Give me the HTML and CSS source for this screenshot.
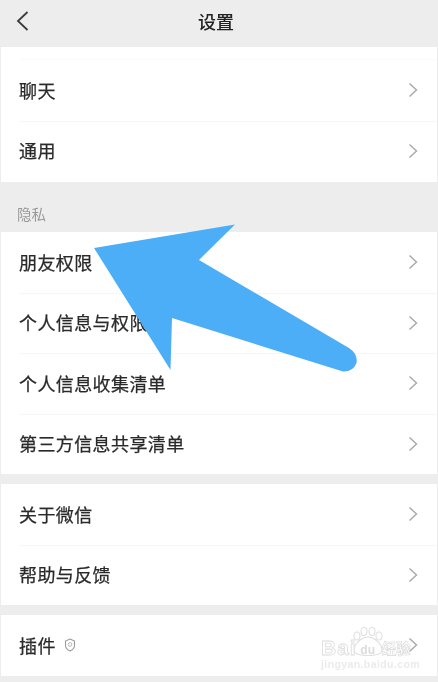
FILE: index.html
```html
<!DOCTYPE html>
<html lang="zh-CN">
<head>
<meta charset="utf-8">
<title>设置</title>
<link rel="stylesheet" href="styles.css">
</head>
<body>
<div class="screen">
  <header class="nav">
    <svg class="back" width="14" height="20" viewBox="0 0 14 20"><path d="M11.500 1 2 10l9.500 9" fill="none" stroke="#3c3c3c" stroke-width="1.800"/></svg>
    <h1 class="title">设置</h1>
  </header>

  <section class="group group-top">
    <div class="row-stub"></div>
    <div class="row"><span class="label">聊天</span><svg class="chev" viewBox="0 0 10 16"><path d="M1.500 1.500 8.500 8l-7 6.500"/></svg></div>
    <div class="row"><span class="label">通用</span><svg class="chev" viewBox="0 0 10 16"><path d="M1.500 1.500 8.500 8l-7 6.500"/></svg></div>
  </section>

  <div class="section-title">隐私</div>

  <section class="group">
    <div class="row"><span class="label">朋友权限</span><svg class="chev" viewBox="0 0 10 16"><path d="M1.500 1.500 8.500 8l-7 6.500"/></svg></div>
    <div class="row"><span class="label">个人信息与权限</span><svg class="chev" viewBox="0 0 10 16"><path d="M1.500 1.500 8.500 8l-7 6.500"/></svg></div>
    <div class="row"><span class="label">个人信息收集清单</span><svg class="chev" viewBox="0 0 10 16"><path d="M1.500 1.500 8.500 8l-7 6.500"/></svg></div>
    <div class="row"><span class="label">第三方信息共享清单</span><svg class="chev" viewBox="0 0 10 16"><path d="M1.500 1.500 8.500 8l-7 6.500"/></svg></div>
  </section>

  <section class="group gap">
    <div class="row"><span class="label">关于微信</span><svg class="chev" viewBox="0 0 10 16"><path d="M1.500 1.500 8.500 8l-7 6.500"/></svg></div>
    <div class="row"><span class="label">帮助与反馈</span><svg class="chev" viewBox="0 0 10 16"><path d="M1.500 1.500 8.500 8l-7 6.500"/></svg></div>
  </section>

  <section class="group gap">
    <div class="row">
      <span class="label">插件</span>
      <svg class="shield" width="12" height="14" viewBox="0 0 12 14"><path d="M6 1 10.500 3v4.500C10.500 10 8 12 6 13 4 12 1.500 10 1.500 7.500V3z" fill="none" stroke="#9a9a9a" stroke-width="1.100"/><circle cx="6" cy="6.500" r="1.800" fill="none" stroke="#b5b5b5"/></svg>
      <svg class="chev" viewBox="0 0 10 16"><path d="M1.500 1.500 8.500 8l-7 6.500"/></svg>
    </div>
  </section>

  <svg class="arrow" width="438" height="682" viewBox="0 0 438 682"><path d="M94 248 235 224.500 199 260 349 348Q358 354 356.500 363 353 372 343 371.500L172 318 170.500 370Z" fill="#4daef8"/></svg>

  <div class="watermark">
    <svg class="paw" width="34" height="30" viewBox="0 0 34 30"><g fill="#fff" stroke="#e0e0e0" stroke-width="1.100"><ellipse cx="5" cy="9" rx="3" ry="4"/><ellipse cx="12" cy="4.500" rx="3" ry="4"/><ellipse cx="20" cy="4.500" rx="3" ry="4"/><ellipse cx="27" cy="9" rx="3" ry="4"/><path d="M16 10C10 10 3 16 2 22c-.5 4 3 6.500 14 6.500s14.500-2.500 14-6.500C29 16 22 10 16 10z"/></g></svg>
    <div class="wm-main"><span class="wm-bai">Bai</span><span class="wm-du">du</span><span class="wm-jy">经验</span></div>
    <div class="wm-url">jingyan.baidu.com</div>
  </div>
</div>
</body>
</html>
```
FILE: styles.css
```css
* { box-sizing: border-box; margin: 0; padding: 0; }
html, body { width: 438px; height: 682px; overflow: hidden; background: #ededed; }
body { font-family: "Noto Sans CJK SC", "Liberation Sans", sans-serif; }
.screen { position: relative; width: 438px; height: 682px; background: #ededed; overflow: hidden; }
.nav { height: 47px; display: flex; align-items: center; justify-content: center; position: relative; }
.back { position: absolute; left: 16px; top: 11px; }
.title { font-size: 18px; font-weight: 500; color: #222; line-height: 1; margin: -6px 6px 0 0; filter: blur(.4px); }
.group { background: #fff; margin-left: 1px; margin-right: 1px; }
.group-top { height: 135px; }
.row-stub { height: 13px; border-bottom: 1px solid #fafafa; margin-left: 19px; }
.row { height: 60.500px; display: flex; align-items: center; padding: 0 19px 0 18px; position: relative; }
.row + .row::before { content: ""; position: absolute; left: 18px; right: 0; top: 0; height: 1px; background: #f6f6f6; }
.label { font-size: 18px; font-weight: 400; -webkit-text-stroke: .25px #2a2a2a; letter-spacing: .4px; color: #2a2a2a; line-height: 1; margin-top: -1px; filter: blur(.5px); }
.chev { width: 10px; height: 16px; margin-left: auto; fill: none; stroke: #a8a8a8; stroke-width: 1.400; filter: blur(.3px); }
.section-title { height: 50px; padding: 24px 0 0 17px; font-size: 14.500px; line-height: 16px; color: #999; filter: blur(.5px); }
.gap { margin-top: 10px; }
.shield { margin-left: 8px; }
.arrow { position: absolute; left: 0; top: 0; }
.watermark { position: absolute; left: 320px; top: 626px; width: 92px; height: 48px; filter: blur(.4px); }
.paw { position: absolute; left: 32px; top: 1px; }
.wm-main { position: absolute; left: 1px; top: 13px; height: 18px; display: flex; align-items: center; font-family: "Liberation Sans", "Noto Sans CJK SC", sans-serif; color: #fff; line-height: 18px; }
.wm-bai { font-size: 21px; font-weight: 700; letter-spacing: 1px; -webkit-text-stroke: .8px #dcdcdc; }
.wm-du { font-size: 12px; font-weight: 700; margin-top: 3px; width: 22px; text-align: center; color: #dcdcdc; }
.wm-jy { font-size: 14.500px; font-weight: 700; font-family: "Noto Sans CJK SC", sans-serif; margin-left: 3px; -webkit-text-stroke: .6px #d8d8d8; }
.wm-url { position: absolute; left: 1px; top: 33px; height: 11px; font-family: "Liberation Sans", sans-serif; font-size: 10.500px; font-weight: 700; color: #ebebeb; line-height: 11px; white-space: nowrap; letter-spacing: .4px; }
```
